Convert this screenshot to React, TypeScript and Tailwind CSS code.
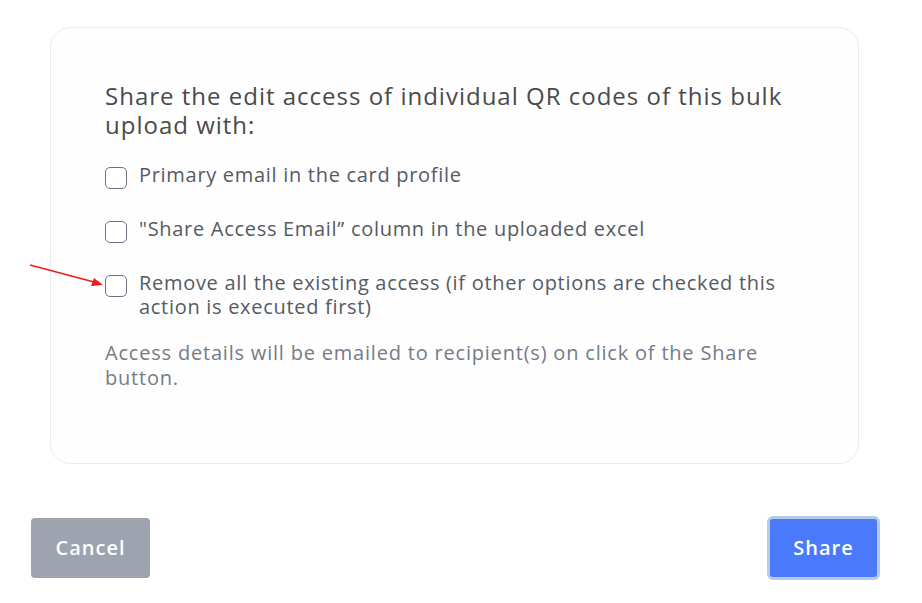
import React from "react";

function Box() {
  return <span className="mt-[4px] box-border h-[22px] w-[22px] shrink-0 rounded-[5px] border-[1.5px] border-[#6b7385] bg-white" />;
}

export default function App() {
  return (
    <div className="relative h-[603px] w-[922px] bg-white" style={{ fontFamily: '"Open Sans", "Noto Sans", sans-serif' }}>
      <div className="pl-[50px] pt-[27px]">
        <div className="box-border h-[437px] w-[809px] rounded-[20px] border border-[#ebebf5] bg-[#fefeff] pl-[54px] pr-[55px] pt-[53px]">
          <h2 className="text-[24px] font-medium leading-[29px] tracking-[1px] text-[#4a4a4a]">
            Share the edit access of individual QR codes of this bulk upload with:
          </h2>
          <div className="mt-[24px] flex flex-col gap-[28px] text-[20px] leading-[24px] tracking-[0.7px] text-[#555a63]">
            <label className="flex items-start gap-[12px]">
              <Box />
              <span>Primary email in the card profile</span>
            </label>
            <label className="flex items-start gap-[12px]">
              <Box />
              <span>"Share Access Email” column in the uploaded excel</span>
            </label>
            <label className="flex items-start gap-[12px]">
              <Box />
              <span>Remove all the existing access (if other options are checked this action is executed first)</span>
            </label>
          </div>
          <p className="mt-[21px] text-[20px] leading-[25px] tracking-[0.8px] text-[#767b86]">
            Access details will be emailed to recipient(s) on click of the Share button.
          </p>
        </div>
      </div>
      <div className="mt-[52px] flex items-center justify-between pl-[31px] pr-[42px]">
        <button className="h-[60px] w-[119px] rounded-[4px] bg-[#9ea3b0] text-[20px] font-semibold tracking-[1px] text-white">Cancel</button>
        <button className="box-border h-[64px] w-[113px] rounded-[6px] border-[3px] border-[#b3cce3] bg-[#4b79fb] text-[20px] font-semibold tracking-[1px] text-white">Share</button>
      </div>
      <svg className="pointer-events-none absolute left-0 top-0" width="922" height="603">
        <line x1="30" y1="265" x2="94" y2="282" stroke="#ee1c1c" strokeWidth="1.6" />
        <polygon points="103,285 91,286 94,278" fill="#ee1c1c" />
      </svg>
    </div>
  );
}
